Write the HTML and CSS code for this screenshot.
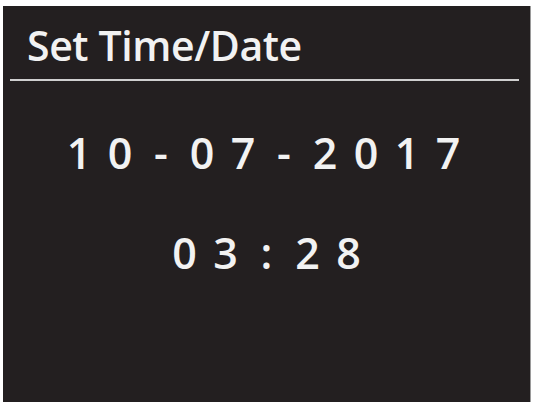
FILE: index.html
```html
<!DOCTYPE html>
<html>
<head>
<meta charset="utf-8">
<link rel="stylesheet" href="styles.css">
</head>
<body>
<div class="screen">
  <div class="title">Set Time/Date</div>
  <div class="rule"></div>
  <div class="row date">
    <span>1</span><span>0</span><span>-</span><span>0</span><span>7</span><span>-</span><span>2</span><span>0</span><span>1</span><span>7</span>
  </div>
  <div class="row time">
    <span>0</span><span>3</span><span>:</span><span>2</span><span>8</span>
  </div>
</div>
</body>
</html>
```
FILE: styles.css
```css
html, body {
  margin: 0;
  padding: 0;
  background: #ffffff;
}
body {
  width: 534px;
  height: 403px;
  overflow: hidden;
  font-family: "Open Sans", "DejaVu Sans", sans-serif;
}
.screen {
  margin: 6px 0 0 3px;
  width: 528px;
  height: 396px;
  background: #231f20;
  border-right: 1px solid #9a9a9a;
  box-sizing: border-box;
  display: flex;
  flex-direction: column;
  color: #f2f2f2;
}
.title {
  margin: 18px 0 0 24px;
  font-size: 41px;
  font-weight: 600;
  line-height: 43px;
  letter-spacing: -0.4px;
}
.rule {
  margin: 12px 11px 0 7px;
  height: 2px;
  background: #cfcfcf;
}
.row {
  display: flex;
  justify-content: center;
  font-size: 43px;
  font-weight: 600;
  line-height: 43px;
}
.row span {
  width: 41px;
  text-align: center;
}
.date {
  margin-top: 50px;
  margin-left: -6px;
}
.time {
  margin-top: 57px;
}
```
